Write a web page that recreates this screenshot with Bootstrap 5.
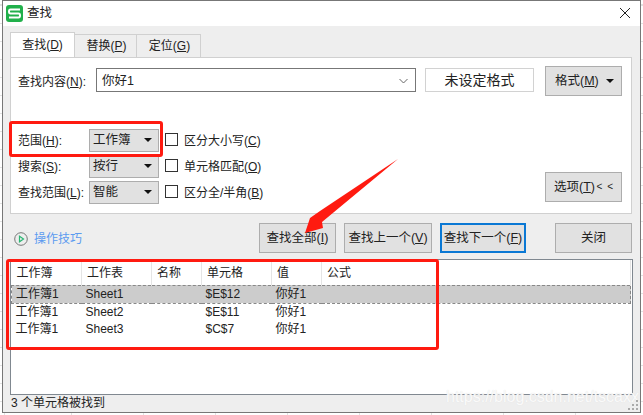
<!DOCTYPE html>
<html lang="zh-CN">
<head>
<meta charset="utf-8">
<title>查找</title>
<link rel="stylesheet" href="https://cdn.jsdelivr.net/npm/bootstrap@5.3.0/dist/css/bootstrap.min.css">
<style>
html,body{height:100%;overflow:hidden}
body{font:12px/16px "Liberation Sans","Noto Sans CJK SC",sans-serif;color:#222;background-color:#fff;
 background-image:repeating-linear-gradient(90deg,#e2e2e2 0 1px,transparent 1px 72px),repeating-linear-gradient(0deg,#e2e2e2 0 1px,transparent 1px 18px);background-position:71px 0,0 5px}
u{text-underline-offset:1px}
.win{position:relative;margin-left:2px;width:639px;height:413px;background:#eee;border:1px solid #777}
.ttl{height:25px;background:#fff;padding-left:3px}
.logo{width:17px;height:17px;background:#21b04b;border-radius:3px;margin-right:4px}
.ttl-t{font-size:12.5px}
.x-ic{margin-right:9px}
.tabrow{padding:7px 0 0 7px;height:31px}
.tb{width:62px;height:23px;margin-top:1px;padding-left:2px;border:1px solid #d0d0d0;border-left:0;border-bottom:0;background:#eee;line-height:22px;text-align:center}
.tb.on{width:65px;height:25px;margin-top:-1px;margin-bottom:-1px;padding-left:0;background:#fff;border-left:1px solid #d0d0d0;position:relative;z-index:1;line-height:24px}
.tb.t3{width:64px}
.pane{margin:0 8px 0 7px;height:157px;background:#fff;border:1px solid #d0d0d0;padding:8px 9px 0 7px}
.lb{width:71px;white-space:nowrap}
.lb1{width:78px;white-space:nowrap}
.fld{width:320px;height:24px;border:1px solid #777;padding:2px 7px 0 5px;margin-top:2px;font-size:12.5px}
.fmt{width:109px;height:24px;margin:2px 0 0 9px;border:1px solid #d2d2d2;font-size:14px}
.gbtn{background:#e1e1e1;border:1px solid #adadad;white-space:nowrap;color:#222}
.bfmt{width:77px;height:30px;margin-left:11px;padding:0 7px 0 9px;font-size:12.5px}
.tri{width:0;height:0;border-left:4px solid transparent;border-right:4px solid transparent;border-top:4px solid #111}
.opts{margin-top:33px;height:77px;position:relative}
.optrow{height:26px}
.cb{width:70px;height:23px;background:#e1e1e1;border:1px solid #adadad;padding:0 6px 0 3px;font-size:12.5px}
.chk{width:13px;height:13px;border:1px solid #333;margin:0 6px 0 6px;background:#fff}
.bopt{position:absolute;right:0;top:43px;width:77px;height:30px;padding:0 8px;font-size:12.5px}
.lts{word-spacing:2px;font-size:10px}
.act{height:46px;padding:9px 8px 0 11px}
.play{margin-right:6px}
.tip{color:#5b9bf0;font-size:12px}
.bact{height:30px;padding:0;font-size:12.5px}
.w77{width:77px}.w88{width:88px}.w86{width:86px}
.bnow{border:2px solid #0a78d4}
.gapclose{margin-left:21px}
.res{margin:0 7px;height:136px;background:#fff;border:1px solid #808890;overflow:hidden}
.tbl{table-layout:fixed;width:620px;margin:0;color:#222}
.tbl th,.tbl td{padding:0 0 0 4px;border:0;font-weight:400;background:transparent;color:#222;white-space:nowrap}
.tbl th{height:25px;border-right:1px solid #e5e5e5;vertical-align:middle;padding-left:5px}
.tbl td{height:17px;line-height:17px;vertical-align:middle}
.tbl tr.sel td{background:#ccc;border-top:1px dashed #888;border-bottom:1px dashed #888}
.tbl tr.sel td:first-child{border-left:1px dashed #888}
.tbl tr.sel td:last-child{border-right:1px dashed #888}
.stat{padding:0 0 0 8px;line-height:17px}
.rbox{position:absolute;border:3px solid #ff1a10;border-radius:3px;pointer-events:none}
.r1{left:6px;top:120px;width:154px;height:36px}
.r2{left:3px;top:258px;width:433px;height:91px}
.arw{position:absolute;left:287px;top:149px;pointer-events:none}
.mark-w{position:absolute;left:443px;top:387px;color:rgba(255,255,255,.85);font-size:16px;line-height:18px;white-space:nowrap;text-shadow:0 0 1px #ddd}
.grip{position:absolute;right:1px;bottom:1px}
</style>
</head>
<body>
<div class="win d-flex flex-column">
  <div class="ttl d-flex align-items-center">
    <div class="logo d-flex align-items-center justify-content-center">
      <svg width="13" height="11" viewBox="0 0 13 11" fill="none" stroke="#fff" stroke-width="2"><path d="M12 1.500H2.500Q1 1.500 1 3.500T2.500 5.500H10.500Q12 5.500 12 7.500T10.500 9.500H1"/></svg>
    </div>
    <span class="ttl-t">查找</span>
    <svg class="x-ic ms-auto" width="12" height="12" viewBox="0 0 12 12" stroke="#222" stroke-width="1"><path d="M1 1L11 11M11 1L1 11"/></svg>
  </div>
  <div class="tabrow d-flex">
    <div class="tb on">查找(<u>D</u>)</div>
    <div class="tb">替换(<u>P</u>)</div>
    <div class="tb t3">定位(<u>G</u>)</div>
  </div>
  <div class="pane">
    <div class="d-flex align-items-start">
      <div class="lb1 pt-1 mt-1">查找内容(<u>N</u>):</div>
      <div class="fld d-flex align-items-center justify-content-between">
        <span>你好1</span>
        <svg width="9" height="6" viewBox="0 0 9 6" fill="none" stroke="#666"><path d="M.5 1L4.500 5L8.500 1"/></svg>
      </div>
      <div class="fmt d-flex align-items-center justify-content-center">未设定格式</div>
      <div class="gbtn bfmt d-flex align-items-center justify-content-between"><span>格式(<u>M</u>)</span><span class="tri"></span></div>
    </div>
    <div class="opts">
      <div class="optrow d-flex align-items-start">
        <div class="lb pt-1">范围(<u>H</u>):</div>
        <div class="cb d-flex align-items-center justify-content-between"><span>工作簿</span><span class="tri"></span></div>
        <div class="chk mt-1"></div><div class="pt-1">区分大小写(<u>C</u>)</div>
      </div>
      <div class="optrow d-flex align-items-start">
        <div class="lb pt-1">搜索(<u>S</u>):</div>
        <div class="cb d-flex align-items-center justify-content-between"><span>按行</span><span class="tri"></span></div>
        <div class="chk mt-1"></div><div class="pt-1">单元格匹配(<u>O</u>)</div>
      </div>
      <div class="optrow d-flex align-items-start">
        <div class="lb pt-1">查找范围(<u>L</u>):</div>
        <div class="cb d-flex align-items-center justify-content-between"><span>智能</span><span class="tri"></span></div>
        <div class="chk mt-1"></div><div class="pt-1">区分全/半角(<u>B</u>)</div>
      </div>
      <div class="gbtn bopt d-flex align-items-center justify-content-between"><span>选项(<u>T</u>)</span><span class="lts">&lt; &lt;</span></div>
    </div>
  </div>
  <div class="act d-flex align-items-start">
    <div class="d-flex align-items-center mt-1 pt-1">
      <svg class="play" width="14" height="14" viewBox="0 0 14 14" fill="none"><circle cx="7" cy="7" r="6.300" stroke="#777"/><path d="M5.500 4.200L9.500 7L5.500 9.800Z" stroke="#2bb673" stroke-width="1.200"/></svg>
      <span class="tip">操作技巧</span>
    </div>
    <div class="ms-auto d-flex gap-2">
      <div class="gbtn bact w77 d-flex align-items-center justify-content-center">查找全部(<u>I</u>)</div>
      <div class="gbtn bact w88 d-flex align-items-center justify-content-center">查找上一个(<u>V</u>)</div>
      <div class="gbtn bact bnow w86 d-flex align-items-center justify-content-center">查找下一个(<u>F</u>)</div>
      <div class="gbtn bact w77 d-flex align-items-center justify-content-center gapclose">关闭</div>
    </div>
  </div>
  <div class="res">
    <table class="table tbl">
      <colgroup><col style="width:70px"><col style="width:70px"><col style="width:50px"><col style="width:70px"><col style="width:50px"><col></colgroup>
      <thead><tr><th>工作簿</th><th>工作表</th><th>名称</th><th>单元格</th><th>值</th><th>公式</th></tr></thead>
      <tbody>
        <tr class="sel"><td>工作簿1</td><td>Sheet1</td><td></td><td>$E$12</td><td>你好1</td><td></td></tr>
        <tr><td>工作簿1</td><td>Sheet2</td><td></td><td>$E$11</td><td>你好1</td><td></td></tr>
        <tr><td>工作簿1</td><td>Sheet3</td><td></td><td>$C$7</td><td>你好1</td><td></td></tr>
      </tbody>
    </table>
  </div>
  <div class="stat">3 个单元格被找到</div>
  <div class="rbox r1"></div>
  <div class="rbox r2"></div>
  <svg class="arw" width="120" height="90" viewBox="0 0 120 90"><path d="M108 9L30 61L20 68L15 83L33 78L32 72Z" fill="#ff1a10"/></svg>
  <div class="mark-w">https://blog.csdn.net/tscaxx</div>
  <svg class="grip" width="11" height="11" viewBox="0 0 11 11" fill="#aaa"><rect x="8" y="0" width="2" height="2"/><rect x="4" y="4" width="2" height="2"/><rect x="8" y="4" width="2" height="2"/><rect x="0" y="8" width="2" height="2"/><rect x="4" y="8" width="2" height="2"/><rect x="8" y="8" width="2" height="2"/></svg>
</div>
<script src="https://cdn.jsdelivr.net/npm/bootstrap@5.3.0/dist/js/bootstrap.bundle.min.js"></script>
</body>
</html>
